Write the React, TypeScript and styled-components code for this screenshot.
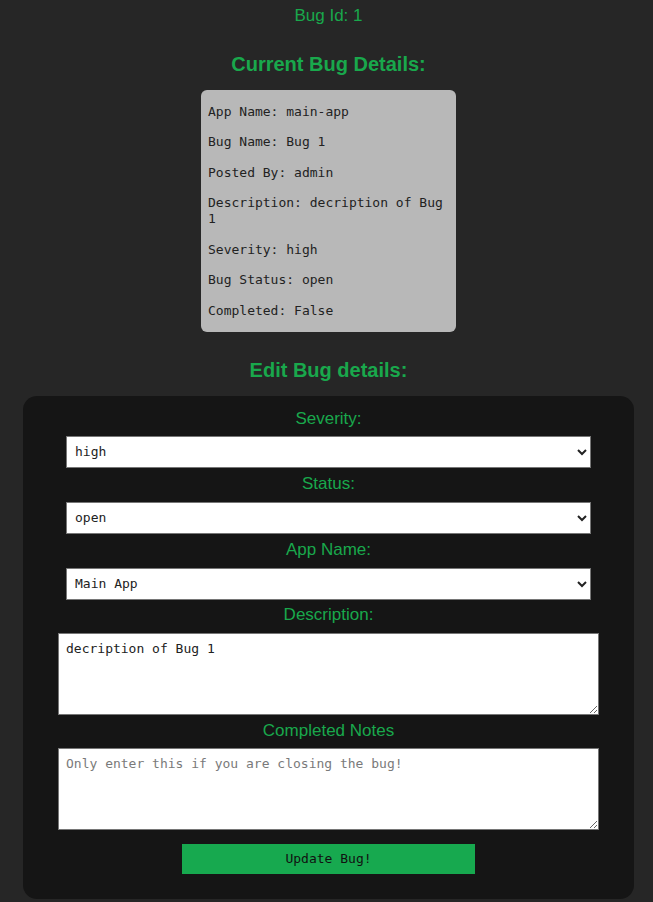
import * as React from 'react';
import styled, { createGlobalStyle } from 'styled-components';

const GlobalStyle = createGlobalStyle`
  body {
    margin: 0;
    background: #262626;
    font-family: "Liberation Sans", Arial, sans-serif;
    overflow: hidden;
  }
`;

const green = '#19a84c';
const mono = '"DejaVu Sans Mono", "Liberation Mono", monospace';

const Page = styled.div`
  display: flex;
  flex-direction: column;
  align-items: center;
  padding-left: 4px;
  min-height: 902px;
`;

const BugId = styled.div`
  margin-top: 6px;
  font-size: 17px;
  line-height: 20px;
  color: ${green};
`;

const Heading = styled.h2<{ $top: number; $bottom: number }>`
  margin: ${(p) => p.$top}px 0 ${(p) => p.$bottom}px;
  font-size: 20px;
  line-height: 23px;
  font-weight: bold;
  color: ${green};
`;

const DetailsCard = styled.div`
  width: 255px;
  box-sizing: border-box;
  padding: 0 7px;
  background: #b8b8b8;
  border-radius: 6px;
  overflow: hidden;
  & p {
    margin: 14.5px 0;
    font-family: ${mono};
    font-size: 13px;
    line-height: 16px;
    color: #222;
  }
  & p:first-child {
    margin-top: 13.5px;
  }
  & p:last-child {
    margin-bottom: 13px;
  }
`;

const EditForm = styled.form`
  width: 611px;
  box-sizing: border-box;
  margin: 0 19px;
  padding: 13px 0 25px;
  background: #151515;
  border-radius: 14px;
  display: flex;
  flex-direction: column;
  align-items: center;
`;

const Label = styled.label<{ $after?: number }>`
  font-size: 17px;
  line-height: 20px;
  color: ${green};
  margin-bottom: ${(p) => p.$after ?? 8}px;
`;

const Select = styled.select<{ $after?: number }>`
  width: 525px;
  height: 32px;
  box-sizing: border-box;
  margin-bottom: ${(p) => p.$after ?? 6}px;
  padding: 0 4px;
  font-family: ${mono};
  font-size: 13px;
  color: #222;
  background: #fff;
  border: 1px solid #767676;
  border-radius: 0;
`;

const TextArea = styled.textarea<{ $after: number }>`
  width: 541px;
  height: 82px;
  box-sizing: border-box;
  margin: 0 0 ${(p) => p.$after}px;
  padding: 7px;
  font-family: ${mono};
  font-size: 13px;
  line-height: 16px;
  color: #222;
  background: #fff;
  border: 1px solid #767676;
  border-radius: 0;
  &::placeholder {
    color: #7a7a7a;
  }
`;

const SubmitButton = styled.button`
  width: 293px;
  height: 30px;
  border: none;
  background: #17a94f;
  color: #111;
  font-family: ${mono};
  font-size: 13px;
  cursor: pointer;
`;

const details = [
  'App Name: main-app',
  'Bug Name: Bug 1',
  'Posted By: admin',
  'Description: decription of Bug 1',
  'Severity: high',
  'Bug Status: open',
  'Completed: False',
];

export default function App(): JSX.Element {
  return (
    <Page>
      <GlobalStyle />
      <BugId>Bug Id: 1</BugId>
      <Heading $top={26.5} $bottom={14.5}>Current Bug Details:</Heading>
      <DetailsCard>
        {details.map((d) => (
          <p key={d}>{d}</p>
        ))}
      </DetailsCard>
      <Heading $top={27.5} $bottom={13.5}>Edit Bug details:</Heading>
      <EditForm onSubmit={(e) => e.preventDefault()}>
        <Label $after={7}>Severity:</Label>
        <Select defaultValue="high">
          <option value="low">low</option>
          <option value="medium">medium</option>
          <option value="high">high</option>
        </Select>
        <Label>Status:</Label>
        <Select defaultValue="open">
          <option value="open">open</option>
          <option value="closed">closed</option>
        </Select>
        <Label>App Name:</Label>
        <Select defaultValue="main" $after={5}>
          <option value="main">Main App</option>
        </Select>
        <Label>Description:</Label>
        <TextArea $after={6} defaultValue="decription of Bug 1" />
        <Label $after={7}>Completed Notes</Label>
        <TextArea $after={14} placeholder="Only enter this if you are closing the bug!" />
        <SubmitButton type="submit">Update Bug!</SubmitButton>
      </EditForm>
    </Page>
  );
}
